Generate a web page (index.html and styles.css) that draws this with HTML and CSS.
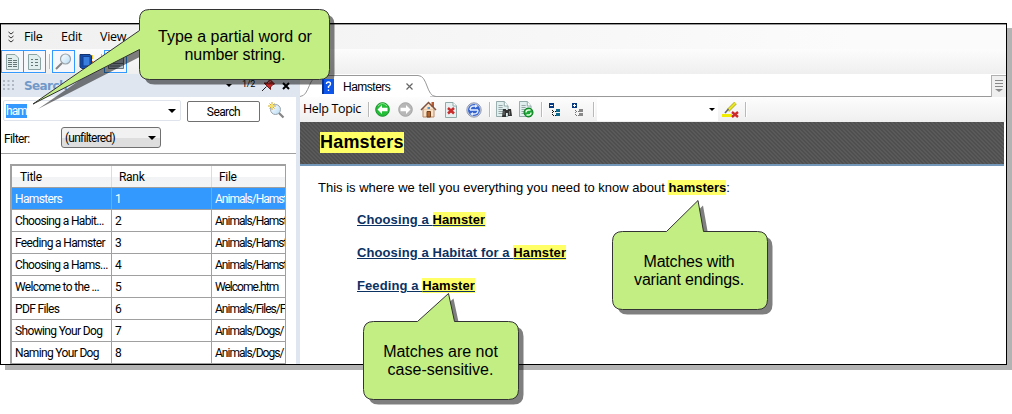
FILE: index.html
```html
<!DOCTYPE html>
<html lang="en">
<head>
<meta charset="utf-8">
<title>Help Viewer</title>
<link rel="stylesheet" href="styles.css">
</head>
<body>
<svg class="defs" width="0" height="0" aria-hidden="true">
  <defs>
    <g id="doc"><path d="M.5.5H10L14.5 5V15.500H.5Z" fill="#e1eeee" stroke="#8ba3a3"/><path d="M10 .5V5H14.500" fill="#fff" stroke="#8ba3a3"/></g>
    <g id="doclines" fill="none" stroke="#8fa0a0"><path d="M3 4.500H8M3 6.500H8M3 8.500H12M3 10.500H12M3 12.500H9"/></g>
    <linearGradient id="lens" x1="0" y1="0" x2="1" y2="1"><stop offset="0" stop-color="#fff"/><stop offset="1" stop-color="#b7dcf5"/></linearGradient>
    <g id="arrow"><path d="M2.500 7.500 7 3V5.800H12.500V9.200H7V12Z" fill="#fff"/></g>
  </defs>
</svg>
<div class="window">
  <div class="menubar">
    <svg class="chev" width="6" height="13" viewBox="0 0 6 13"><path d="M.5 1 3 3 5.500 1M.5 5 3 7 5.500 5M.5 9 3 11 5.500 9" fill="none" stroke="#333"/></svg>
    <span class="m-file">File</span><span class="m-edit">Edit</span><span class="m-view">View</span>
  </div>
  <div class="toolbar">
    <div class="tbtn"><svg width="13" height="16" viewBox="0 0 13 16"><path d="M.5.5H9L12.500 4V15.500H.5Z" fill="#e1eeee" stroke="#8ba3a3"/><path d="M2 4.500H6M2 6.500H6M2 8.500H6M2 10.500H6M2 12.500H6M7 6.500H11M7 8.500H11M7 10.500H11M7 12.500H11" stroke="#647777"/></svg></div>
    <div class="tbtn second"><svg width="13" height="16" viewBox="0 0 13 16"><path d="M.5.5H9L12.500 4V15.500H.5Z" fill="#e1eeee" stroke="#8ba3a3"/><path d="M3 5.500H5M3 8.500H5M3 11.500H5M7 5.500H10M7 8.500H10M7 11.500H10" stroke="#647777"/></svg></div>
    <i class="sep s1"></i>
    <div class="tbtn lensbtn"><svg width="17" height="17" viewBox="0 0 17 17"><path d="M7 10 1 16" stroke="#858585" stroke-width="2"/><circle cx="10.500" cy="6" r="5" fill="url(#lens)" stroke="#9aa4ad" stroke-width="1.200"/></svg></div>
    <svg class="book" width="15" height="17" viewBox="0 0 15 17"><path d="M9 2H14V6H9Z" fill="#ffc72f"/><path d="M9 8H14V12H9Z" fill="#f37a22"/><path d="M1 1.500H11L12.500 3V15.500H3L1 14Z" fill="#1555b8" stroke="#12336f"/><path d="M3 2V14M4 3.500H11V13H4Z" fill="#397fdf" stroke="#123f91"/></svg>
    <i class="sep s2"></i>
    <div class="tbtn last"><svg width="16" height="16" viewBox="0 0 16 16"><path d="M.5 1.500H15.500V14.500H.5Z" fill="#b6c7d2" stroke="#65747e"/><path d="M1 9.500H15M2 12H12" stroke="#65747e"/></svg></div>
  </div>
  <div class="body">
    <section class="pane">
      <header class="panehead">
        <svg class="grip" width="11" height="11" viewBox="0 0 11 11"><path d="M0 1H11M0 5H11M0 9H11" stroke="#b0b8c3" stroke-width="2" stroke-dasharray="2 2.500"/></svg>
        <b>Search</b>
        <div class="headtools"><i class="down"></i><span>1/2</span>
          <svg width="15" height="13" viewBox="0 0 15 13"><path d="M5.500 7.500 1 12" stroke="#222"/><path d="M3 4 6 4 8 1.500 9 .5 13.500 5 12 5.500 9.500 8 9.500 10.500Z" fill="#cf2b2b" stroke="#721818"/><path d="M7 4 10 2" stroke="#ff9390"/></svg>
          <svg width="8" height="8" viewBox="0 0 8 8"><path d="M1 1 7 7M7 1 1 7" stroke="#000" stroke-width="2"/></svg>
        </div>
      </header>
      <div class="searchrow">
        <div class="input"><span>ham</span><i class="down big"></i></div>
        <button>Search</button>
        <svg width="17" height="17" viewBox="0 0 17 17"><path d="M10 10 15.500 15.500" stroke="#858585" stroke-width="2.200"/><circle cx="7.500" cy="7.500" r="5" fill="url(#lens)" stroke="#9aa4ad"/><path d="M4 0V8M0 4H8M1.500 1.500 6.500 6.500M6.500 1.500 1.500 6.500" stroke="#d3ac2b"/><path d="M4 2V6M2 4H6" stroke="#fff277"/></svg>
      </div>
      <div class="filterrow"><span>Filter:</span><div class="combo"><span>(unfiltered)</span><i class="down big"></i></div></div>
      <div class="table">
        <div class="row head"><span>Title</span><span>Rank</span><span>File</span></div>
        <div class="row sel"><span>Hamsters</span><span>1</span><span>Animals/Hamst</span></div>
        <div class="row"><span>Choosing a Habit...</span><span>2</span><span>Animals/Hamst</span></div>
        <div class="row"><span>Feeding a Hamster</span><span>3</span><span>Animals/Hamst</span></div>
        <div class="row"><span>Choosing a Hams...</span><span>4</span><span>Animals/Hamst</span></div>
        <div class="row"><span>Welcome to the ...</span><span>5</span><span>Welcome.htm</span></div>
        <div class="row"><span>PDF Files</span><span>6</span><span>Animals/Files/F</span></div>
        <div class="row"><span>Showing Your Dog</span><span>7</span><span>Animals/Dogs/</span></div>
        <div class="row"><span>Naming Your Dog</span><span>8</span><span>Animals/Dogs/</span></div>
      </div>
    </section>
    <main class="viewer">
      <div class="tabs">
        <div class="tab">
          <svg class="tabline" width="136" height="23" viewBox="0 0 136 23"><path d="M0 22.500C10 22 8 1.500 20 1.500H118C128 1.500 126 22.500 136 22.500" fill="#fff" stroke="#999"/></svg>
          <div class="tabcontent">
            <svg width="12" height="15" viewBox="0 0 12 15"><path d="M0 0H12V15H0Z" fill="#0d55e8"/><path d="M0 0H2V15H0Z" fill="#0a318f"/><path d="M4.500 5Q4.500 3 6.500 3 8.500 3 8.500 5 8.500 6.300 6.500 7.500V9M6.500 10.500V12" fill="none" stroke="#fff" stroke-width="1.400"/></svg>
            <span>Hamsters</span>
            <svg width="7" height="7" viewBox="0 0 7 7"><path d="M.5.5 6.500 6.500M6.500.5.5 6.500" stroke="#666" stroke-width="1.200"/></svg>
          </div>
        </div>
        <div class="tabmenu"><svg width="8" height="12" viewBox="0 0 8 12"><path d="M0 .5H8M0 3.500H8M0 6.500H8" stroke="#888"/><path d="M0 9H8L4 12Z" fill="#888"/></svg></div>
      </div>
      <div class="viewbar">
        <span class="topic">Help Topic</span><i class="sep"></i>
        <svg class="i1" width="15" height="15" viewBox="0 0 15 15"><circle cx="7.500" cy="7.500" r="6.800" fill="#24bd37" stroke="#139127"/><path d="M3 4Q7.500-1 12 4" fill="none" stroke="#8be68d"/><use href="#arrow"/></svg>
        <svg class="i2" width="15" height="15" viewBox="0 0 15 15"><circle cx="7.500" cy="7.500" r="6.800" fill="#b7b7b7" stroke="#a5a5a5"/><use href="#arrow" transform="matrix(-1 0 0 1 15 0)"/></svg>
        <svg class="i3" width="17" height="17" viewBox="0 0 17 17"><path d="M3 8H14V16H3Z" fill="#f9e1c5" stroke="#b98a6b"/><path d="M11.500 1H14V6H11.500Z" fill="#b9592e"/><path d="M3 8.500 8.500 3 14 8.500Z" fill="#f9e1c5"/><path d="M1 9 8.500 1.500 16 9" fill="none" stroke="#80503c" stroke-width="1.500"/><path d="M7 10.500H10.500V16H7Z" fill="#b3652d" stroke="#71411f"/><path d="M7.500 6H10V8H7.500Z" fill="#5a95c8"/></svg>
        <svg class="i4" width="12" height="16" viewBox="0 0 12 16"><path d="M.5.5H8L11.500 4V15.500H.5Z" fill="#e6f0f0" stroke="#92aaaa"/><path d="M8 .5V4H11.500" fill="#fff" stroke="#92aaaa"/><path d="M3 6 9 11.500M9 6 3 11.500" stroke="#c92c2c" stroke-width="2.500"/></svg>
        <svg class="i5" width="16" height="16" viewBox="0 0 16 16"><circle cx="8" cy="8" r="7.200" fill="#c4cbe0" stroke="#959daf"/><circle cx="8" cy="8" r="6" fill="#3564cf"/><path d="M4 8Q4 4 8 4H10M12 8Q12 12 8 12H6M4 8H8M8 8H12" fill="none" stroke="#e6eeff" stroke-width="1.300"/><path d="M9 2.300 12 4 9 6ZM7 10 4 12 7 13.700Z" fill="#e6eeff"/></svg>
        <i class="sep"></i>
        <svg class="i6" width="16" height="17" viewBox="0 0 16 17"><g transform="scale(.83 1)"><use href="#doc"/><use href="#doclines"/></g><path d="M7 8H10V9H12V8H15L16 15H12V12H10V16H6Z" fill="#333"/><path d="M8 10V14M13.500 10V14" stroke="#777"/></svg>
        <svg class="i7" width="15" height="17" viewBox="0 0 15 17"><g transform="scale(.83 1)"><use href="#doc"/><use href="#doclines"/></g><circle cx="9.500" cy="11.500" r="4.500" fill="#1aa534" stroke="#08791c"/><path d="M7 11.500Q7 9 9.500 9H11.500M12 11.500Q12 14 9.500 14H7.500" fill="none" stroke="#dfffdf" stroke-width="1.300"/></svg>
        <i class="sep"></i>
        <svg class="i8" width="12" height="14" viewBox="0 0 12 14"><path d="M0 0H5V5H0Z" fill="#063a82"/><path d="M1 2.500H4" stroke="#fff"/><path d="M3.500 7V13M4 8.500H7M4 12.500H7" stroke="#111" stroke-dasharray="1 1"/><path d="M7 6H11V9H7ZM7 10H11V13H7Z" fill="#11698b"/></svg>
        <svg class="i9" width="12" height="14" viewBox="0 0 12 14"><path d="M0 0H5V5H0Z" fill="#063a82"/><path d="M1 2.500H4M2.500 1V4" stroke="#fff"/><path d="M3.500 7V13M4 8.500H7M4 12.500H7" stroke="#777" stroke-dasharray="1 1"/><path d="M7 6H11V9H7ZM7 10H11V13H7Z" fill="#888"/></svg>
        <i class="sep"></i>
        <div class="picker"><i class="down"></i></div>
        <svg class="i10" width="17" height="16" viewBox="0 0 17 16"><path d="M0 12H10V15H0Z" fill="#f0ed00"/><path d="M13.500 1 6 8.500" stroke="#aaa62a" stroke-width="3.400"/><path d="M13.500 1 6 8.500" stroke="#e9e628" stroke-width="2.200"/><path d="M6.500 7 3 11" stroke="#667" stroke-width="1.600"/><path d="M10 10 16 15M16 10 10 15" stroke="#cc2929" stroke-width="2.300"/></svg>
        <i class="sep"></i>
      </div>
      <div class="banner"><h1>Hamsters</h1></div>
      <article>
        <p>This is where we tell you everything you need to know about <b class="hit">hamsters</b>:</p>
        <a>Choosing a <b class="hit">Hamster</b></a>
        <a>Choosing a Habitat for a <b class="hit">Hamster</b></a>
        <a>Feeding a <b class="hit">Hamster</b></a>
      </article>
    </main>
  </div>
</div>

<div class="callout c1">
  <svg width="310" height="110" viewBox="0 0 310 110"><path class="shade" transform="translate(5 5)" d="M129.500 9.500H299.500Q309.500 9.500 309.500 19.500V69.500Q309.500 79.500 299.500 79.500H129.500Q119.500 79.500 119.500 69.500V49.500L13 104 119.500 30.500V19.500Q119.500 9.500 129.500 9.500Z"/><path class="bubble" d="M129.500 9.500H299.500Q309.500 9.500 309.500 19.500V69.500Q309.500 79.500 299.500 79.500H129.500Q119.500 79.500 119.500 69.500V49.500L13 104 119.500 30.500V19.500Q119.500 9.500 129.500 9.500Z"/></svg>
  <div class="ctext">Type a partial word or<br><span class="tight">number string.</span></div>
</div>
<div class="callout c2">
  <svg width="156" height="110" viewBox="0 0 156 110"><path class="shade" transform="translate(5 5)" d="M10.500 31.500H54.500L86 .5 91.500 31.500H145.500Q155.500 31.500 155.500 41.500V99.500Q155.500 109.500 145.500 109.500H10.500Q.5 109.500 .5 99.500V41.500Q.5 31.500 10.500 31.500Z"/><path class="bubble" d="M10.500 31.500H54.500L86 .5 91.500 31.500H145.500Q155.500 31.500 155.500 41.500V99.500Q155.500 109.500 145.500 109.500H10.500Q.5 109.500 .5 99.500V41.500Q.5 31.500 10.500 31.500Z"/></svg>
  <div class="ctext">Matches with<br>variant endings.</div>
</div>
<div class="callout c3">
  <svg width="156" height="107" viewBox="0 0 156 107"><path class="shade" transform="translate(5 5)" d="M10.500 28.500H54.500L85.500.5 91.500 28.500H145.500Q155.500 28.500 155.500 38.500V96.500Q155.500 106.500 145.500 106.500H10.500Q.5 106.500 .5 96.500V38.500Q.5 28.500 10.500 28.500Z"/><path class="bubble" d="M10.500 28.500H54.500L85.500.5 91.500 28.500H145.500Q155.500 28.500 155.500 38.500V96.500Q155.500 106.500 145.500 106.500H10.500Q.5 106.500 .5 96.500V38.500Q.5 28.500 10.500 28.500Z"/></svg>
  <div class="ctext">Matches are not<br>case-sensitive.</div>
</div>
</body>
</html>
```
FILE: styles.css
```css
* { box-sizing: border-box; }
body { margin: 0; padding-top: 23px; width: 1012px; height: 414px; overflow: hidden; background: #fff; font-family: "Open Sans", sans-serif; font-size: 12px; color: #000; }
svg { display: block; flex: none; }
.defs { position: absolute; }
.window { width: 1007px; height: 342px; border: 1px solid #000; box-shadow: 5px 5px 0 #b3b3b3; display: flex; flex-direction: column; background: #fff; overflow: hidden; }
.menubar { height: 25px; flex: none; display: flex; align-items: center; padding-left: 7px; border-top: 1px solid #999; background: linear-gradient(90deg, #f0f0f0, #fbfbfb 85%); font-size: 12.5px; line-height: 24px; }
.menubar span { letter-spacing: -.3px; }
.m-file { width: 37px; margin-left: 10px; }
.m-edit { width: 39px; }
.toolbar { height: 25px; flex: none; display: flex; align-items: center; background: linear-gradient(#fcfcfc, #efefef); }
.tbtn { width: 23px; height: 23px; border: 1px solid #3399ff; display: flex; align-items: center; justify-content: center; flex: none; background: #f5f7fa; }
.second { margin-left: -1px; }
.sep { width: 1px; height: 15px; background: #b9b9b9; box-shadow: 1px 0 #fff; flex: none; }
.s1 { margin: 0 2px 0 3px; }
.book { margin-left: 4px; }
.s2 { margin: 0 2px 0 7px; }
.body { display: flex; flex: 1; min-height: 0; }
.pane { width: 299px; border-right: 4px solid #dfe6f0; flex: none; overflow: hidden; font-family: Roboto, sans-serif; }
.panehead { height: 23px; background: #dfe6f0; display: flex; align-items: center; padding-left: 2px; }
.panehead b { font: bold 12px "DejaVu Sans", sans-serif; color: #7199c8; margin-left: 10px; width: 50px; letter-spacing: -.6px; }
.headtools { display: flex; align-items: center; margin-left: 152px; }
.headtools span { font-size: 9px; margin: -3px 6px 0 10px; width: 13px; letter-spacing: -.3px; }
.headtools svg + svg { margin-left: 6px; }
.down { width: 0; height: 0; border: 3px solid transparent; border-top: 3px solid #000; border-bottom: 0; flex: none; }
.big { border-width: 4px; border-bottom: 0; }
.searchrow { height: 28px; display: flex; padding: 3px 0 0 2px; }
.input { width: 178px; height: 21px; border: 1px solid #dfe3ec; border-radius: 2px; display: flex; justify-content: space-between; align-items: center; padding: 0 4px 0 2px; }
.input span { background: #3399ff; color: #fff; height: 14px; line-height: 14px; width: 21px; letter-spacing: -.9px; white-space: nowrap; }
.searchrow button { width: 73px; height: 21px; margin: 1px 8px 0 6px; border: 1px solid #707070; border-radius: 2px; background: #fff; font: 12px Roboto, sans-serif; letter-spacing: -.6px; padding: 0; }
.searchrow svg { margin-top: 2px; }
.filterrow { height: 29px; border-bottom: 1px solid #a0a0a0; display: flex; padding: 2px 0 0 3px; }
.filterrow > span { width: 57px; line-height: 25px; letter-spacing: -.6px; }
.combo { width: 100px; height: 21px; border: 1px solid #707070; border-radius: 3px; background: linear-gradient(#f1f1f1 50%, #dedede 51%); display: flex; justify-content: space-between; align-items: center; padding: 0 4px 0 3px; letter-spacing: -.85px; }
.combo span { letter-spacing: -.75px; }
.table { width: 276px; margin: 10px 0 0 9px; border: solid #a0a0a0; border-width: 2px 1px 0 2px; overflow: hidden; }
.row { height: 22px; display: grid; grid-template-columns: 100px 100px 73px; border-bottom: 1px solid #a0a0a0; font-size: 12px; line-height: 22px; white-space: nowrap; letter-spacing: -.65px; }
.row span { border-right: 1px solid #a0a0a0; padding-left: 3px; overflow: hidden; }
.row span:last-child { border: 0; letter-spacing: -.98px; }
.head { height: 22px; line-height: 22px; background: linear-gradient(#fff 50%, #f2f3f5 51%, #f5f5f5); letter-spacing: 0; }
.head span, .head span:last-child { border-color: #dcdcdc; padding-left: 7px; letter-spacing: -.3px; }
.head span:first-child { padding-left: 8px; }
.sel { background: #3399ff; color: #fff; }
.viewer { flex: 1; min-width: 0; display: flex; flex-direction: column; }
.tabs { height: 23px; flex: none; display: flex; justify-content: space-between; background: linear-gradient(#999, #999) 130px 22px / 100% 1px no-repeat, #fff; }
.tab { width: 136px; height: 23px; display: grid; }
.tab > * { grid-area: 1 / 1; }
.tabcontent { display: flex; align-items: center; padding: 2px 0 0 22px; z-index: 1; font-family: "Liberation Sans", sans-serif; }
.tabcontent span { width: 63px; margin-left: 9px; letter-spacing: -.5px; }
.tabmenu { width: 15px; margin-top: 1px; background: #efefef; border: solid #b0b0b0; border-width: 1px 0 0 1px; padding: 4px 0 0 3px; }
.viewbar { height: 25px; flex: none; display: flex; align-items: center; background: linear-gradient(#fdfdfd, #efefef); padding-left: 3px; }
.topic { width: 65px; font-size: 12.5px; line-height: 24px; height: 25px; letter-spacing: -.35px; white-space: nowrap; }
.i1 { margin-left: 6px; } .i2 { margin-left: 8px; } .i3 { margin-left: 7px; } .i4 { margin-left: 8px; } .i5 { margin: 0 7px 0 9px; }
.i6 { margin-left: 6px; } .i7 { margin: 0 7px; } .i8 { margin-left: 7px; } .i9 { margin: 0 9px 0 11px; }
.picker { width: 121px; height: 23px; margin: 0 4px 0 3px; background: #fff; display: flex; align-items: center; justify-content: flex-end; padding-right: 3px; }
.i10 { margin-right: 6px; }
.banner { width: 704px; height: 44px; flex: none; border-bottom: 2px solid #7397b8; background: linear-gradient(45deg, #4f4f4f 25%, #5a5a5a 25% 50%, #4f4f4f 50% 75%, #5a5a5a 75%) 0 0 / 4px 4px; padding: 10px 0 0 20px; }
h1 { margin: 0; width: 84px; height: 21px; background: #ffff66; font: bold 18px/21px "Liberation Sans", sans-serif; letter-spacing: .2px; white-space: nowrap; }
article { padding: 14px 0 0 18px; font: 13px/16px "Liberation Sans", sans-serif; }
article p { margin: 0 0 16px; }
article a { display: block; width: max-content; margin: 0 0 17px 39px; font-weight: bold; color: #0b3263; text-decoration: underline; letter-spacing: .1px; }
.hit { background: #ffff66; color: #000; }
.callout { position: absolute; text-align: center; font: 16px/18px "Liberation Sans", sans-serif; }
.callout svg { overflow: visible; position: absolute; left: 0; top: 0; }
.shade { fill: rgba(0, 0, 0, .5); }
.bubble { fill: #c2ee84; stroke: #333; }
.ctext { position: relative; white-space: nowrap; }
.c1 { left: 20px; top: 0; width: 310px; padding: 28px 0 0 120px; }
.c2 { left: 612px; top: 200px; width: 156px; padding: 53px 2px 0 0; letter-spacing: -.2px; }
.c3 { left: 363px; top: 293px; width: 156px; padding: 50px 1px 0 0; }
.tight { letter-spacing: -.1px; }
```
